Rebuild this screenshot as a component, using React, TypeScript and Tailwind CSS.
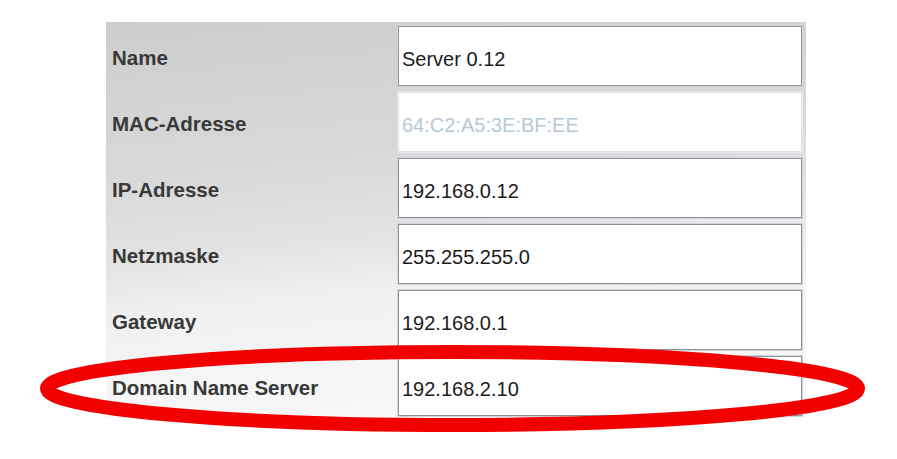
import React from "react";

type Row = { label: string; value: string; disabled?: boolean };

const rows: Row[] = [
  { label: "Name", value: "Server 0.12" },
  { label: "MAC-Adresse", value: "64:C2:A5:3E:BF:EE", disabled: true },
  { label: "IP-Adresse", value: "192.168.0.12" },
  { label: "Netzmaske", value: "255.255.255.0" },
  { label: "Gateway", value: "192.168.0.1" },
  { label: "Domain Name Server", value: "192.168.2.10" },
];

export default function App() {
  return (
    <div
      className="relative w-[897px] h-[459px] bg-white overflow-hidden"
      style={{ fontFamily: '"Liberation Sans", Arial, sans-serif' }}
    >
      <div className="ml-[106px] mt-[22px] w-[700px] flex flex-col bg-[linear-gradient(174deg,#cdcdcd_0%,#d9d9d9_35%,#e3e3e3_52%,#efefef_62%,#f5f5f5_78%,#f9f9f9_100%)]">
        {rows.map((r) => (
          <div key={r.label} className="flex h-[66px]">
            <div className="w-[289px] flex items-center pl-[6px] pt-[9px] pb-[2px] text-[20.5px] font-bold text-[#383838]">
              {r.label}
            </div>
            <div className="flex-1 pl-[3px] pr-[4px] pt-[4px] pb-[2px]">
              <div
                className={
                  r.disabled
                    ? "h-[60px] bg-white border border-[#dde3ea] shadow-[0_0_0_1px_#e6eaee] flex items-center pl-[3px] pt-[5px] text-[20px] text-[#b9c8d8]"
                    : "h-[60px] bg-white border border-[#8d949b] shadow-[0_0_0_1px_#d2d6da] flex items-center pl-[3px] pt-[5px] text-[20px] text-[#1c1c1c]"
                }
              >
                {r.value}
              </div>
            </div>
          </div>
        ))}
      </div>
      <svg
        className="absolute left-0 top-0 pointer-events-none"
        width="897"
        height="459"
        viewBox="0 0 897 459"
      >
        <ellipse
          cx="452.5"
          cy="388.5"
          rx="405.5"
          ry="36.5"
          fill="none"
          stroke="#f20000"
          strokeWidth="14"
        />
      </svg>
    </div>
  );
}
